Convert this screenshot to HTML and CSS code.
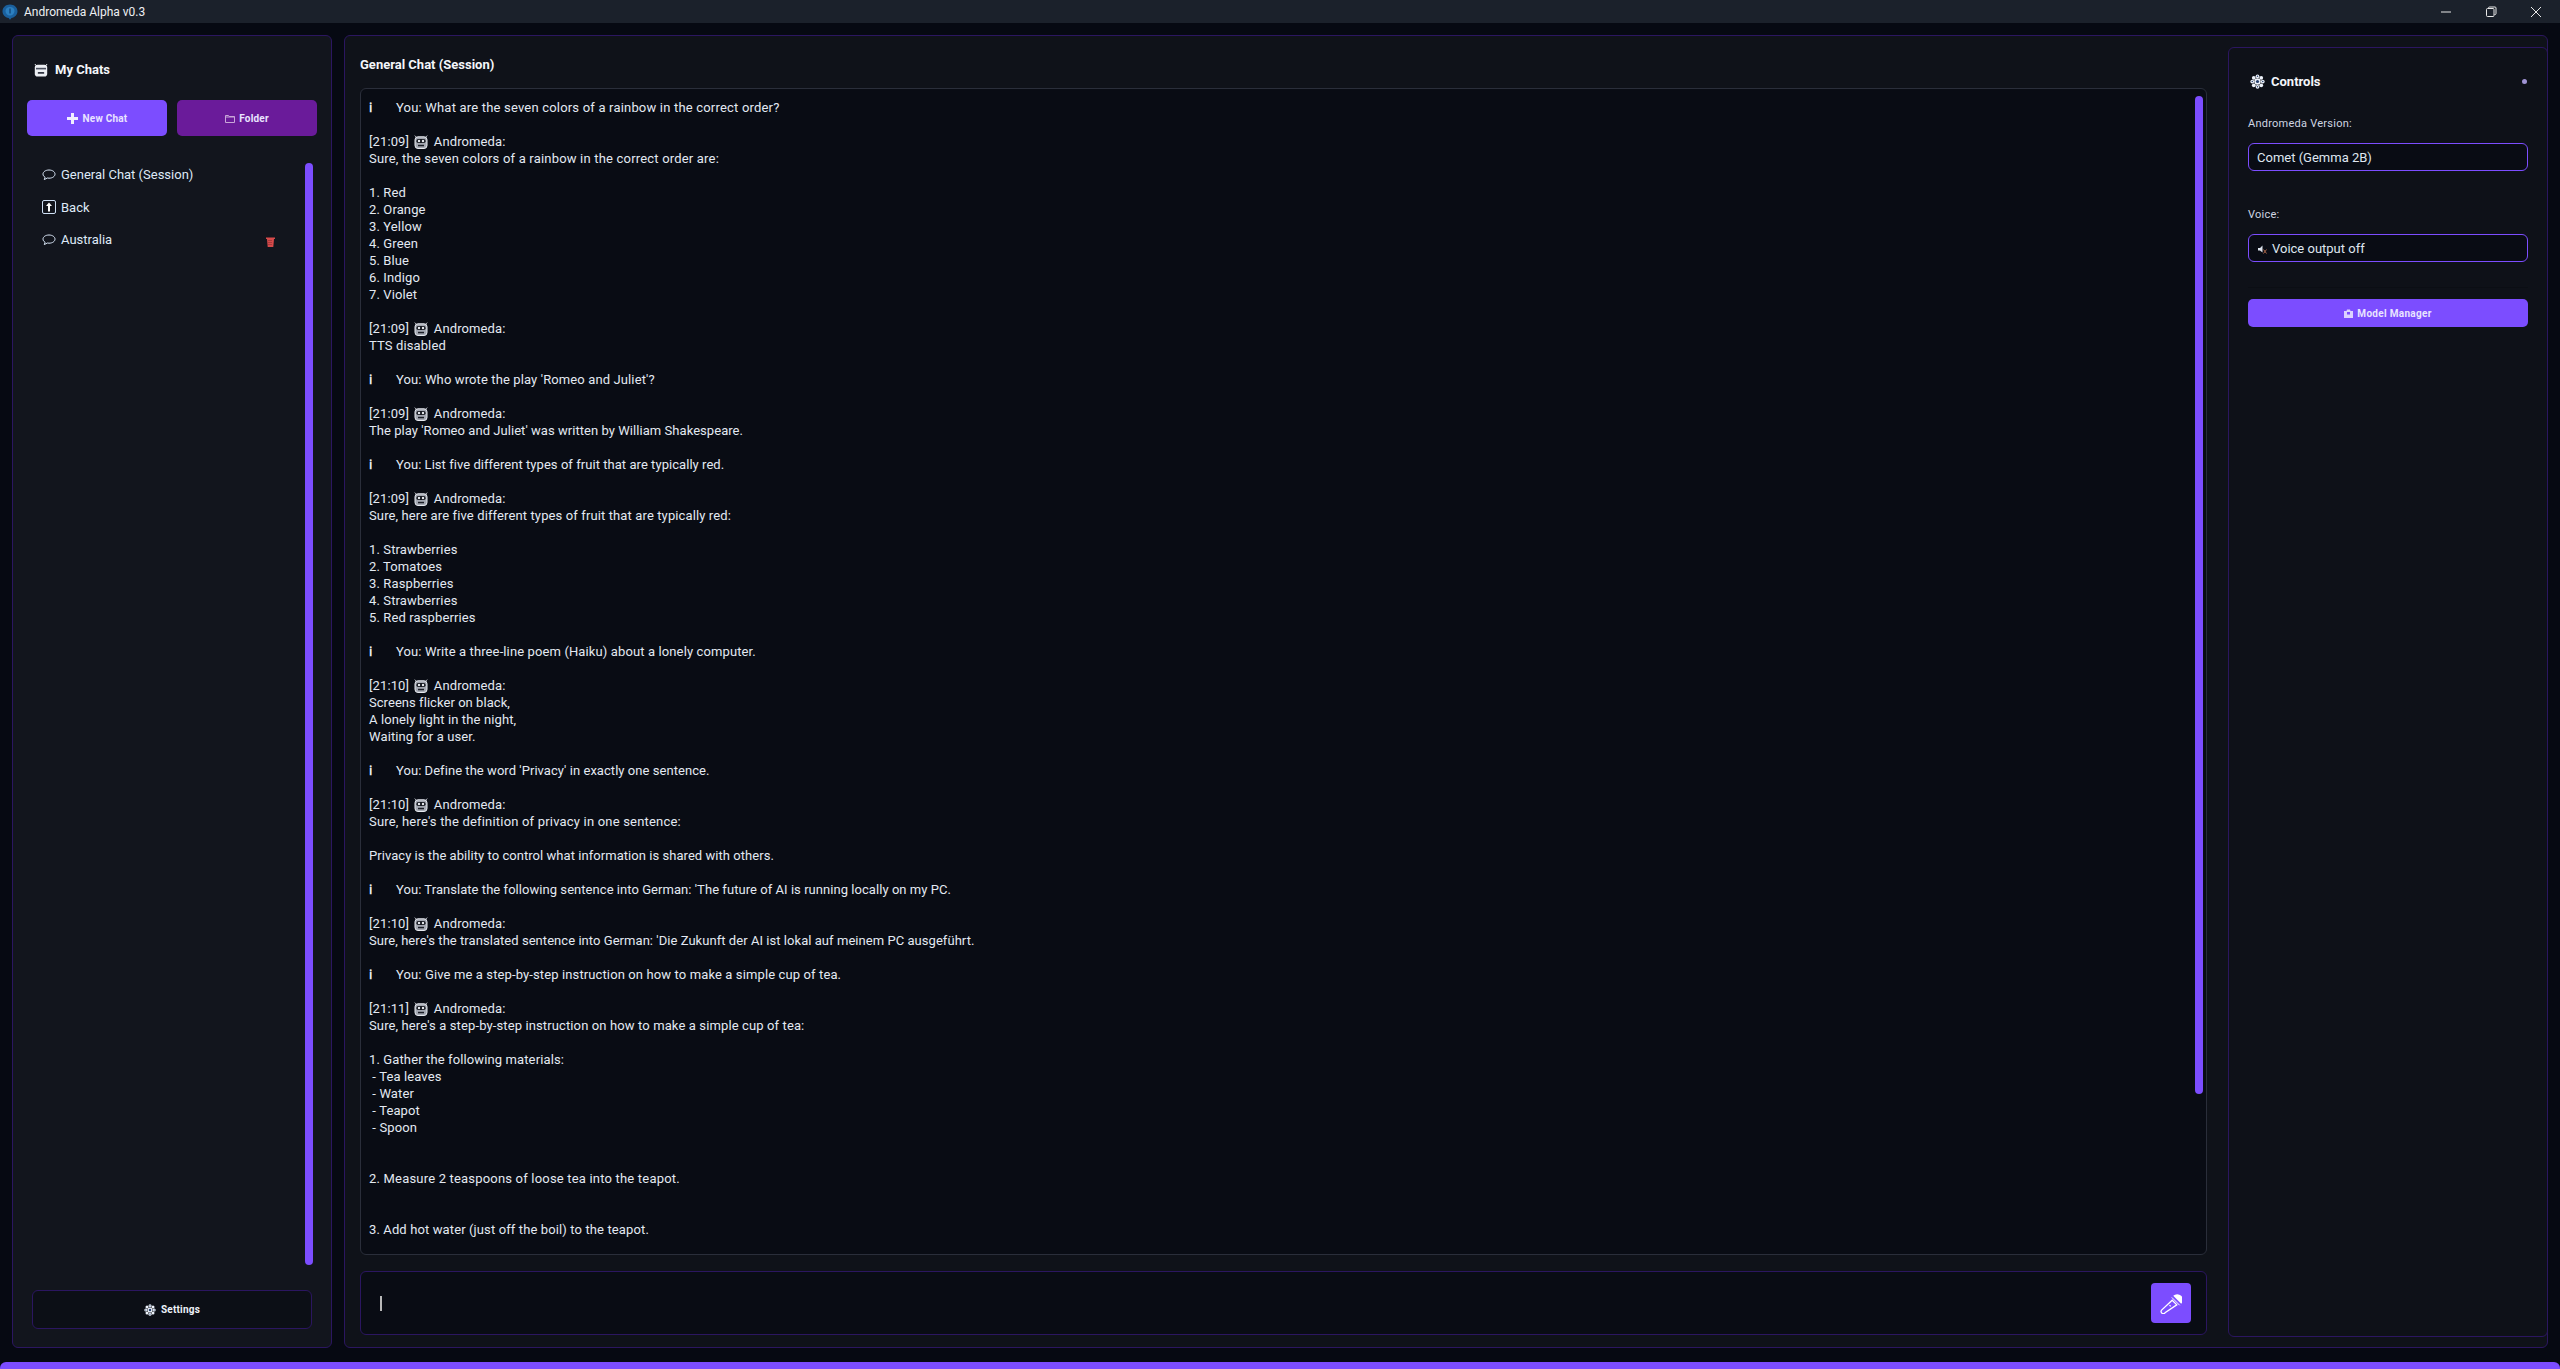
FILE: index.html
```html
<!DOCTYPE html>
<html lang="en">
<head>
<meta charset="utf-8">
<title>Andromeda Alpha v0.3</title>
<link rel="stylesheet" href="styles.css">
</head>
<body>
<svg class="defs" width="0" height="0" aria-hidden="true">
  <defs>
    <symbol id="robot" viewBox="0 0 14 14">
      <path d="M.8.6 2.600 2.400M13.200.6 11.400 2.400" stroke="#c8ccd4" stroke-width="1" fill="none"/>
      <rect x="1" y="1.800" width="12" height="11.700" rx="3" fill="#a4a8b2" stroke="#e6e9ef" stroke-width="1"/>
      <rect x="2.400" y="4" width="9.200" height="4" rx="1.800" fill="#15181f"/>
      <circle cx="5" cy="6" r="1.200" fill="#e8ebf0"/><circle cx="9" cy="6" r="1.200" fill="#e8ebf0"/>
      <rect x="4" y="9.800" width="6" height="1.500" fill="#1c1f28"/>
    </symbol>
    <symbol id="gear" viewBox="0 0 16 16">
      <g fill="#eef3fb">
        <circle cx="8" cy="2.400" r="2"/><circle cx="8" cy="13.600" r="2"/>
        <circle cx="2.400" cy="8" r="2"/><circle cx="13.600" cy="8" r="2"/>
        <circle cx="4" cy="4" r="2"/><circle cx="12" cy="4" r="2"/>
        <circle cx="4" cy="12" r="2"/><circle cx="12" cy="12" r="2"/>
        <circle cx="8" cy="8" r="3.400"/>
      </g>
      <g fill="#27406e">
        <circle cx="8" cy="2.400" r=".8"/><circle cx="8" cy="13.600" r=".8"/>
        <circle cx="2.400" cy="8" r=".8"/><circle cx="13.600" cy="8" r=".8"/>
        <circle cx="8" cy="8" r="1.700"/>
      </g>
    </symbol>
    <symbol id="bubble" viewBox="0 0 14 12">
      <path d="M7 1C3.600 1 1 2.800 1 5.100c0 1.300.8 2.400 2.100 3.100L2.300 10.600l3-1.600c.5.1 1.100.2 1.700.2 3.400 0 6-1.800 6-4.100S10.400 1 7 1Z" fill="none" stroke="#d9e6f7" stroke-width="1"/>
    </symbol>
  </defs>
</svg>

<header class="titlebar">
  <div class="titlebar-left">
    <svg class="app-logo" viewBox="0 0 16 16" aria-hidden="true">
      <path d="M8 .5c4.200 0 7.500 2.900 7.500 6.800 0 3.600-2.800 6.300-6 6.700L8 15.800 6.600 14C3 13.500.5 10.900.5 7.300.5 3.400 3.800.5 8 .5Z" fill="#1a5f9c"/>
      <path d="M3.500 7c0-2.500 2-4 4.500-4s4.500 1.500 4.500 4-2 4.500-4.500 4.500S3.500 9.500 3.500 7Z" fill="#2b7fc0"/>
      <rect x="7.400" y="4.500" width="1.200" height="5" fill="#123f70"/>
    </svg>
    <span class="app-title">Andromeda Alpha v0.3</span>
  </div>
  <div class="window-controls">
    <svg class="win-icon" viewBox="0 0 12 12" aria-hidden="true"><path d="M1 6h10" stroke="#e8e8e8" stroke-width="1"/></svg>
    <svg class="win-icon" viewBox="0 0 12 12" aria-hidden="true"><path d="M3.500 2.500V2a1 1 0 0 1 1-1h5.500a1 1 0 0 1 1 1v5.500a1 1 0 0 1-1 1h-.5" fill="none" stroke="#e8e8e8"/><rect x="1.500" y="2.500" width="7.500" height="8" rx="1" fill="none" stroke="#e8e8e8"/></svg>
    <svg class="win-icon" viewBox="0 0 12 12" aria-hidden="true"><path d="M1 1l10 10M11 1 1 11" stroke="#e8e8e8" stroke-width="1"/></svg>
  </div>
</header>

<main class="workspace">
  <aside class="sidebar">
    <div class="panel-title sidebar-title">
      <svg class="title-icon" viewBox="0 0 14 14" aria-hidden="true">
        <path d="M.8 1 2.800 3M13.200 1 11.200 3" stroke="#e8eaf0" stroke-width="1"/>
        <rect x=".8" y="1.800" width="12.400" height="11.700" rx="2.800" fill="#eceef3"/>
        <rect x="2" y="4.800" width="10" height="1.600" fill="#4a4f5e"/>
        <rect x="3.800" y="9" width="6.400" height="1.800" rx=".6" fill="#2f3340"/>
      </svg>
      <span>My Chats</span>
    </div>
    <div class="action-row">
      <button class="btn btn-primary">
        <svg class="plus-icon" viewBox="0 0 11 11" aria-hidden="true"><path d="M5.500 0v11M0 5.500h11" stroke="#f0edff" stroke-width="3"/></svg>
        New Chat
      </button>
      <button class="btn btn-folder">
        <svg class="folder-icon" viewBox="0 0 10 9" aria-hidden="true"><path d="M.5 1.500h3l.7 1h5.300v6h-9Z" fill="none" stroke="#c9a6d8"/><path d="M.5 3h9" stroke="#c9a6d8"/></svg>
        Folder
      </button>
    </div>
    <div class="chat-list-wrap">
      <ul class="chat-list">
        <li class="chat-item"><svg class="item-icon"><use href="#bubble"/></svg><span>General Chat (Session)</span></li>
        <li class="chat-item"><svg class="item-icon back-icon" viewBox="0 0 14 14" aria-hidden="true"><rect x=".5" y=".5" width="13" height="13" rx="1.500" fill="none" stroke="#cfe0f5"/><path d="M7 2.500 10 6H8v5.500H6V6H4Z" fill="#fff"/></svg><span>Back</span></li>
        <li class="chat-item"><svg class="item-icon"><use href="#bubble"/></svg><span>Australia</span>
          <svg class="trash-icon" viewBox="0 0 9 10" aria-hidden="true"><path d="M0 .5h9v1.500H8L7.300 10H1.700L1 2H0Z" fill="#d64a4a"/><path d="M2.500 3.500h4M2.500 5.500h4M2.500 7.500h4" stroke="#7a2a2e" stroke-dasharray="1 1"/></svg>
        </li>
      </ul>
      <div class="side-scroll"></div>
    </div>
    <button class="btn-settings"><svg class="gear-sm"><use href="#gear"/></svg>Settings</button>
  </aside>

  <section class="center">
    <div class="center-main">
      <h2 class="chat-heading">General Chat (Session)</h2>
      <div class="chat-box">
        <div class="chat-log">
<div class="wide"><span class="info">ℹ</span>You: What are the seven colors of a rainbow in the correct order?</div>
<div>&nbsp;</div>
<div>[21:09] <svg class="robot"><use href="#robot"/></svg> Andromeda:</div>
<div class="wide">Sure, the seven colors of a rainbow in the correct order are:</div>
<div>&nbsp;</div>
<div>1. Red</div>
<div>2. Orange</div>
<div>3. Yellow</div>
<div>4. Green</div>
<div>5. Blue</div>
<div>6. Indigo</div>
<div>7. Violet</div>
<div>&nbsp;</div>
<div>[21:09] <svg class="robot"><use href="#robot"/></svg> Andromeda:</div>
<div>TTS disabled</div>
<div>&nbsp;</div>
<div><span class="info">ℹ</span>You: Who wrote the play 'Romeo and Juliet'?</div>
<div>&nbsp;</div>
<div>[21:09] <svg class="robot"><use href="#robot"/></svg> Andromeda:</div>
<div class="tight">The play 'Romeo and Juliet' was written by William Shakespeare.</div>
<div>&nbsp;</div>
<div class="tight"><span class="info">ℹ</span>You: List five different types of fruit that are typically red.</div>
<div>&nbsp;</div>
<div>[21:09] <svg class="robot"><use href="#robot"/></svg> Andromeda:</div>
<div>Sure, here are five different types of fruit that are typically red:</div>
<div>&nbsp;</div>
<div>1. Strawberries</div>
<div>2. Tomatoes</div>
<div>3. Raspberries</div>
<div>4. Strawberries</div>
<div>5. Red raspberries</div>
<div>&nbsp;</div>
<div><span class="info">ℹ</span>You: Write a three-line poem (Haiku) about a lonely computer.</div>
<div>&nbsp;</div>
<div>[21:10] <svg class="robot"><use href="#robot"/></svg> Andromeda:</div>
<div class="tight">Screens flicker on black,</div>
<div>A lonely light in the night,</div>
<div>Waiting for a user.</div>
<div>&nbsp;</div>
<div class="tight"><span class="info">ℹ</span>You: Define the word 'Privacy' in exactly one sentence.</div>
<div>&nbsp;</div>
<div>[21:10] <svg class="robot"><use href="#robot"/></svg> Andromeda:</div>
<div class="wide">Sure, here's the definition of privacy in one sentence:</div>
<div>&nbsp;</div>
<div class="tight">Privacy is the ability to control what information is shared with others.</div>
<div>&nbsp;</div>
<div class="tight"><span class="info">ℹ</span>You: Translate the following sentence into German: 'The future of AI is running locally on my PC.</div>
<div>&nbsp;</div>
<div>[21:10] <svg class="robot"><use href="#robot"/></svg> Andromeda:</div>
<div class="tight">Sure, here's the translated sentence into German: 'Die Zukunft der AI ist lokal auf meinem PC ausgeführt.</div>
<div>&nbsp;</div>
<div><span class="info">ℹ</span>You: Give me a step-by-step instruction on how to make a simple cup of tea.</div>
<div>&nbsp;</div>
<div>[21:11] <svg class="robot"><use href="#robot"/></svg> Andromeda:</div>
<div>Sure, here's a step-by-step instruction on how to make a simple cup of tea:</div>
<div>&nbsp;</div>
<div>1. Gather the following materials:</div>
<div>&nbsp;- Tea leaves</div>
<div>&nbsp;- Water</div>
<div>&nbsp;- Teapot</div>
<div>&nbsp;- Spoon</div>
<div>&nbsp;</div>
<div>&nbsp;</div>
<div class="wide">2. Measure 2 teaspoons of loose tea into the teapot.</div>
<div>&nbsp;</div>
<div>&nbsp;</div>
<div>3. Add hot water (just off the boil) to the teapot.</div>
        </div>
        <div class="chat-scroll"></div>
      </div>
      <div class="input-bar">
        <div class="caret"></div>
        <button class="mic-btn" aria-label="Microphone">
          <svg class="mic-icon" viewBox="0 0 22 22" aria-hidden="true">
            <path d="M13.200 3.800A5.500 5.500 0 0 1 21.200 11.800Z" fill="#fff"/>
            <path d="M11.800 5.400 19.700 13.300" stroke="#fff" stroke-width="1"/>
            <path d="M12.200 8.200 16.800 12.800 5 20.800a1.900 1.900 0 0 1-3.400-2.700Z" fill="none" stroke="#fff" stroke-width="1.300"/>
            <path d="M9.500 13.200 10.700 14.400" stroke="#fff" stroke-width="1.200"/>
          </svg>
        </button>
      </div>
    </div>
    <aside class="controls">
      <div class="controls-head">
        <div class="panel-title">
          <svg class="gear-lg"><use href="#gear"/></svg>
          <span>Controls</span>
        </div>
        <span class="status-dot"></span>
      </div>
      <label class="field-label">Andromeda Version:</label>
      <div class="select">Comet (Gemma 2B)</div>
      <label class="field-label voice-label">Voice:</label>
      <div class="select">
        <svg class="mute-icon" viewBox="0 0 9 9" aria-hidden="true"><path d="M0 3h2l2.500-2.500v7L2 5.500H0Z" fill="#dde3ee"/><path d="M5.500 4.500 8.500 8.500M8.500 4.500l-3 4" stroke="#a8664a" stroke-width="1"/></svg>
        Voice output off
      </div>
      <div class="separator"></div>
      <button class="btn btn-primary btn-model">
        <svg class="model-icon" viewBox="0 0 9 9" aria-hidden="true"><path d="M0 2h2.500l.5-1.500h3L6.500 2H9v7H0Z" fill="#dcd2ff"/><rect x="3" y="3" width="3" height="2.500" fill="#7c4dff"/></svg>
        Model Manager
      </button>
    </aside>
  </section>
</main>
<footer class="bottom-bar"></footer>
</body>
</html>
```

FILE: styles.css
```css
* { box-sizing: border-box; }
html, body { height: 100%; }
body {
  margin: 0;
  display: flex;
  flex-direction: column;
  height: 1369px;
  background: #060912;
  color: #e8ecf4;
  font-family: Roboto, "Liberation Sans", sans-serif;
  font-size: 13px;
  overflow: hidden;
}
.defs { position: absolute; }

.titlebar {
  height: 23px;
  flex: none;
  background: #1b212b;
  display: flex;
  justify-content: space-between;
  align-items: center;
}
.titlebar-left { display: flex; align-items: center; }
.app-logo { width: 16px; height: 16px; margin-left: 2px; }
.app-title { margin-left: 6px; font-size: 12px; color: #eef0f3; }
.window-controls { display: flex; align-items: center; gap: 33px; margin-right: 18px; }
.win-icon { width: 12px; height: 12px; display: block; }

.workspace {
  flex: 1;
  display: flex;
  gap: 12px;
  padding: 12px 12px 14px 12px;
  min-height: 0;
}

.sidebar {
  width: 320px;
  flex: none;
  background: #12151d;
  border: 1px solid #2b1660;
  border-radius: 6px;
  display: flex;
  flex-direction: column;
  padding: 25px 14px 18px;
}
.panel-title { display: flex; align-items: center; font-weight: 700; font-size: 13px; color: #f4f6fa; }
.sidebar-title { padding-left: 7px; height: 17px; }
.title-icon { width: 14px; height: 14px; margin-right: 7px; }
.action-row { display: flex; gap: 10px; margin-top: 22px; }
.btn {
  border: 0;
  border-radius: 5px;
  color: #e9e4ff;
  font: 700 10px Roboto, "Liberation Sans", sans-serif;
  letter-spacing: .2px;
  display: flex;
  align-items: center;
  justify-content: center;
  height: 36px;
  padding: 0;
}
.action-row .btn { width: 140px; }
.btn-primary { background: #7c4dff; }
.btn-folder { background: #6a1b9a; }
.plus-icon { width: 11px; height: 11px; margin-right: 5px; }
.folder-icon { width: 10px; height: 9px; margin-right: 4px; }

.chat-list-wrap { flex: 1; display: flex; margin-top: 27px; min-height: 0; padding-right: 4px; }
.chat-list { list-style: none; margin: 0; padding: 0 0 0 15px; flex: 1; display: flex; flex-direction: column; gap: 9.500px; }
.chat-item { display: flex; align-items: center; height: 23px; color: #dfe9f7; font-size: 13px; padding-right: 30px; }
.item-icon { width: 14px; height: 12px; margin-right: 5px; flex: none; }
.back-icon { height: 14px; }
.trash-icon { width: 9px; height: 10px; margin-left: auto; margin-top: 4px; }
.side-scroll { width: 8px; border-radius: 4px; background: #7c4dff; height: 1102px; flex: none; }

.btn-settings {
  flex: none;
  margin: 25px 5px 0;
  height: 39px;
  background: #0c0f16;
  border: 1px solid #2b1660;
  border-radius: 6px;
  color: #eef2f9;
  font: 700 10px Roboto, "Liberation Sans", sans-serif;
  letter-spacing: .2px;
  display: flex;
  align-items: center;
  justify-content: center;
}
.gear-sm { width: 12px; height: 12px; margin-right: 5px; }

.center {
  flex: 1;
  min-width: 0;
  background: #0f1219;
  border: 1px solid #2b1660;
  border-radius: 6px;
  display: flex;
  padding: 11px 0 10px 15px;
  gap: 21px;
}
.center-main { flex: 1; min-width: 0; display: flex; flex-direction: column; }
.chat-heading { margin: 9px 0 0; font-size: 13px; line-height: 17px; font-weight: 700; color: #f4f6fa; height: 32px; }
.chat-box {
  flex: 1;
  min-height: 0;
  background: #090c14;
  border: 1px solid #2a2e3a;
  border-radius: 6px;
  display: flex;
  padding: 10px 3px 0 8px;
  overflow: hidden;
}
.chat-log { flex: 1; min-width: 0; font-size: 13px; line-height: 17px; color: #e3e9f2; letter-spacing: .12px; }
.chat-log > div { height: 17px; white-space: nowrap; }
.chat-log > .tight { letter-spacing: .05px; }
.chat-log > .wide { letter-spacing: .19px; }
.info { display: inline-block; width: 27px; font-family: "DejaVu Serif", serif; font-weight: 700; font-size: 13px; color: #e8ecf4; }
.robot { width: 14px; height: 14px; vertical-align: -3px; margin: 0 2px; }
.chat-scroll { width: 8px; height: 998px; margin-top: -3px; background: #7c4dff; border-radius: 4px; flex: none; }

.input-bar {
  flex: none;
  height: 64px;
  margin: 16px 0 2px;
  background: #090c14;
  border: 1px solid #2b1660;
  border-radius: 6px;
  display: flex;
  align-items: center;
  justify-content: space-between;
  padding: 0 15px 0 19px;
}
.caret { width: 2px; height: 15px; background: #b8b8b8; }
.mic-btn { width: 40px; height: 40px; border: 0; padding: 0; border-radius: 4px; background: #7c4dff; display: flex; align-items: center; justify-content: center; }
.mic-icon { width: 22px; height: 22px; }

.controls {
  width: 320px;
  flex: none;
  margin-right: -1px;
  background: #0e1118;
  border: 1px solid #2b1660;
  border-radius: 6px;
  padding: 23px 19px 0 19px;
  display: flex;
  flex-direction: column;
}
.controls-head { display: flex; justify-content: space-between; align-items: center; height: 20px; padding-left: 2px; }
.gear-lg { width: 15px; height: 15px; margin-right: 6px; }
.status-dot { width: 5px; height: 5px; border-radius: 50%; background: #a094d4; margin-right: 1px; }
.field-label { margin-top: 26px; font-size: 11px; line-height: 14px; color: #cfd6e2; letter-spacing: .25px; }
.voice-label { margin-top: 37px; }
.select {
  margin-top: 12px;
  height: 28px;
  background: #090c14;
  border: 1px solid #7c4dff;
  border-radius: 6px;
  display: flex;
  align-items: center;
  padding-left: 8px;
  font-size: 13px;
  color: #dfe6f0;
}
.mute-icon { width: 9px; height: 9px; margin: 3px 5px 0 1px; }
.separator { margin-top: 25px; height: 1px; background: #0b0e14; }
.btn-model { margin-top: 11px; height: 28px; width: 100%; letter-spacing: .3px; }
.model-icon { width: 9px; height: 9px; margin-right: 4px; }

.bottom-bar { height: 7px; flex: none; background: #7c4dff; border-radius: 6px 6px 0 0; }
```
